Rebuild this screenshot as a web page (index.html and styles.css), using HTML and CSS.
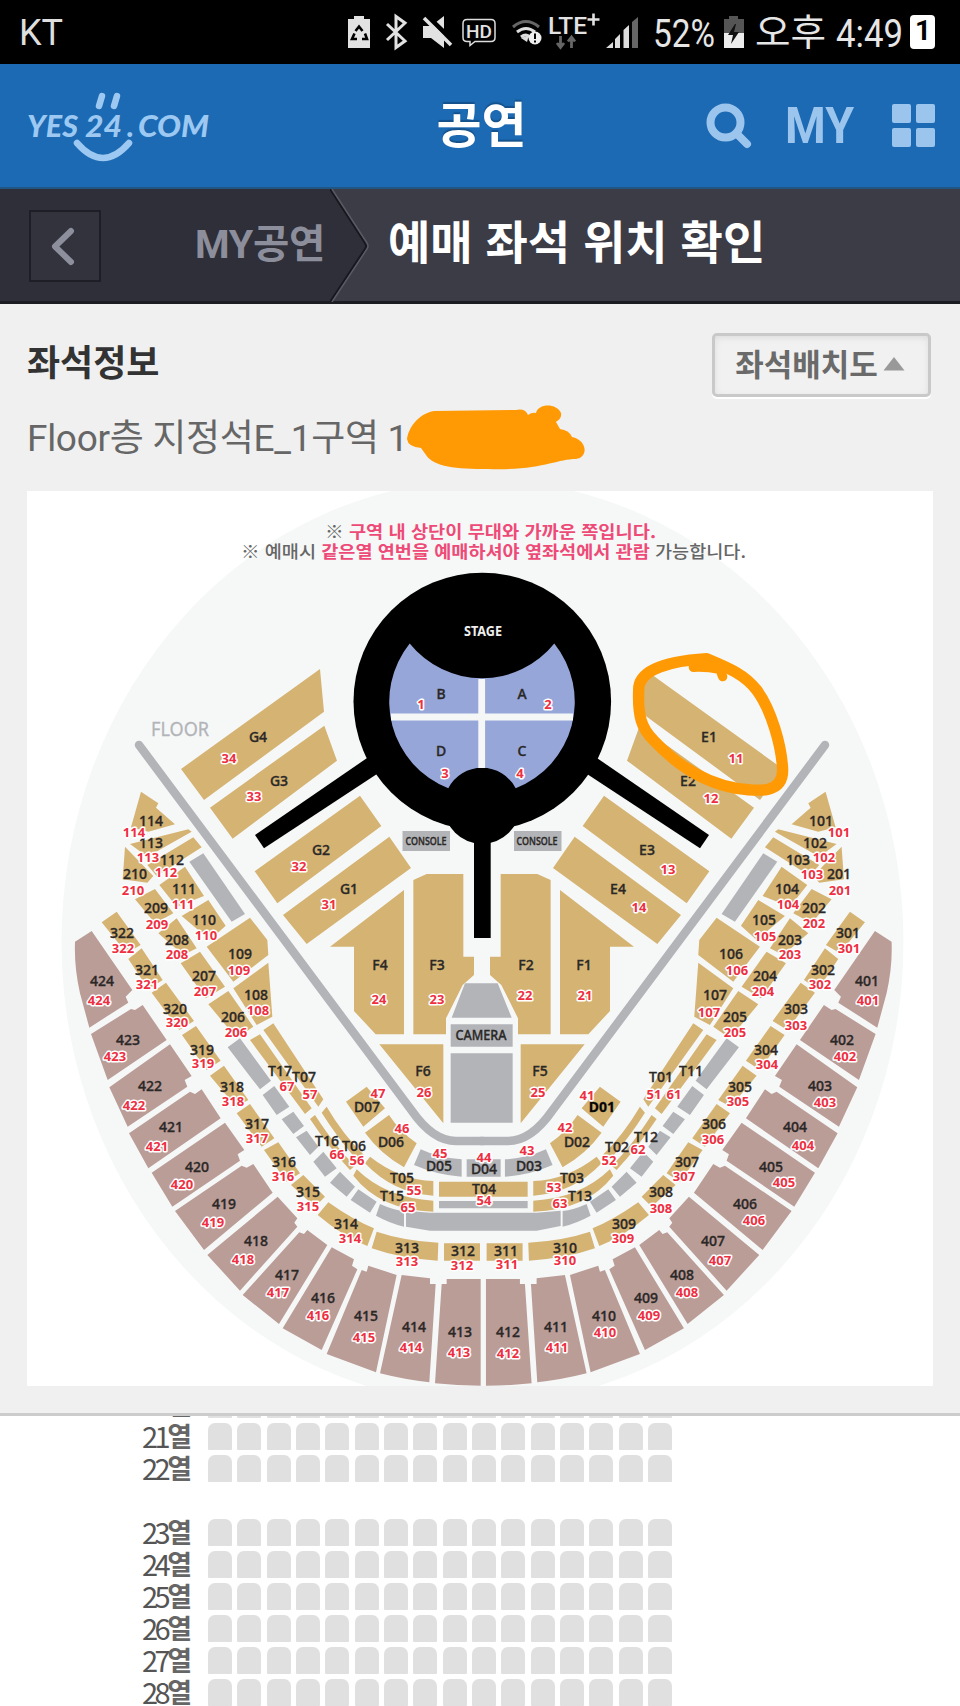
FILE: index.html
```html
<!DOCTYPE html>
<html lang="ko">
<head>
<meta charset="utf-8">
<title>예매 좌석 위치 확인</title>
<link rel="stylesheet" href="styles.css">
</head>
<body>
<div class="status">
  <span class="carrier">KT</span>
  <svg class="status-icons" width="620" height="64" viewBox="340 0 620 64">
    <g fill="#e2e2e2">
      <path d="M348 19h6v-3h10v3h6v29h-22z"/>
      <path d="M423 26h8l13-10v32l-13-10h-8z"/>
    </g>
    <path d="M355.5 31l3.500-4.500 3.500 4.500M365 33.500l2 5.500h-5M357 39h-5l2.500-5.500" fill="none" stroke="#000" stroke-width="2.600"/>
    <path d="M387 24l18 17-9 6.500V16.500l9 6.500-18 17" fill="none" stroke="#e2e2e2" stroke-width="3"/>
    <path d="M424 13l31 30" stroke="#000" stroke-width="5"/>
    <path d="M424 18l27 27" stroke="#e2e2e2" stroke-width="3.500"/>
    <path d="M467 19.500h24q4 0 4 4v14q0 4-4 4h-16l-5 4v-4h-3q-4 0-4-4v-14q0-4 4-4z" fill="none" stroke="#ddd" stroke-width="1.500"/>
    <text x="466" y="38" class="st-b" font-size="19" textLength="26" lengthAdjust="spacingAndGlyphs">HD</text>
    <g fill="none" stroke-width="3">
      <path d="M513 27q13-11 26 0" stroke="#666"/><path d="M517 32q9-7 18 0M521 37q5-4 9 0" stroke="#ddd"/>
    </g>
    <path d="M521 38l6 4 2-7z" fill="#ddd"/>
    <circle cx="535" cy="38" r="6.500" fill="#eee"/><path d="M535 33.500v5.500M535 40.500v2" stroke="#000" stroke-width="2"/>
    <text x="548" y="34" class="st-b" font-size="23" textLength="39" lengthAdjust="spacingAndGlyphs">LTE</text>
    <path d="M587.500 19.500h12M593.500 13.500v12" stroke="#e2e2e2" stroke-width="2.600"/>
    <path d="M560.500 36v11M557 43l3.500 4.500L564 43M571.500 48V38M568 41.500l3.500-4.500 3.500 4.500" fill="none" stroke="#666" stroke-width="2.800"/>
    <path d="M606 48l7-6v6zM615 39l5-5v14h-5zM623.500 30l5.500-5v23h-5.500z" fill="#ddd"/><path d="M632 22l6-5v31h-6z" fill="#666"/>
    <text x="653" y="46.500" class="st" font-size="38" textLength="62" lengthAdjust="spacingAndGlyphs">52%</text>
    <path d="M724 19h5v-3h9v3h6v15h-20z" fill="#555"/><path d="M724 33h20v15h-20z" fill="#ececec"/>
    <path d="M735 24l-7 11h5l-2 9 8-12h-5l2-8z" fill="#111"/>
    <text x="755" y="46" class="st kr" font-size="37" textLength="71" lengthAdjust="spacingAndGlyphs">오후</text>
    <text x="836" y="46.500" class="st" font-size="38" textLength="67" lengthAdjust="spacingAndGlyphs">4:49</text>
    <rect x="910" y="15" width="25" height="34" rx="4" fill="#fff"/>
    <text x="915" y="40" class="one">1</text>
  </svg>
</div>

<header class="head">
  <svg class="logo" width="190" height="80" viewBox="24 84 190 80" role="img" aria-label="YES24.COM">
    <g class="logo-text" font-size="29.500">
      <text x="27" y="136" textLength="51" lengthAdjust="spacingAndGlyphs">YES</text>
      <text x="85" y="136" textLength="37" lengthAdjust="spacingAndGlyphs">24</text>
      <text x="127" y="136">.</text>
      <text x="138" y="136" textLength="71" lengthAdjust="spacingAndGlyphs">COM</text>
    </g>
    <path d="M102 95l-3 10M117 95l-3 10" stroke="#9cc8f2" stroke-width="6.500" stroke-linecap="round"/>
    <path d="M77 142q26 30 52 0" fill="none" stroke="#9cc8f2" stroke-width="6.500" stroke-linecap="round"/>
  </svg>
  <h1>공연</h1>
  <svg class="tools" width="240" height="60" viewBox="695 96 240 60">
    <g fill="none" stroke="#9cc5ee" stroke-width="8"><circle cx="725.500" cy="122.500" r="15"/><path d="M737 134l10 10" stroke-linecap="round"/></g>
    <text x="785" y="142.500" class="my" textLength="69" lengthAdjust="spacingAndGlyphs">MY</text>
    <g fill="#9cc5ee"><rect x="892" y="104" width="19" height="19" rx="2"/><rect x="916" y="104" width="19" height="19" rx="2"/><rect x="892" y="128" width="19" height="19" rx="2"/><rect x="916" y="128" width="19" height="19" rx="2"/></g>
  </svg>
</header>

<nav class="crumbs">
  <div class="prev">
    <span class="back"><svg width="72" height="72" viewBox="0 0 72 72"><path d="M42 21L26 36.500 42 52" fill="none" stroke="#8e8f9c" stroke-width="6" stroke-linecap="round" stroke-linejoin="round"/></svg></span>
    <span class="parent">MY공연</span>
  </div>
  <svg class="arrow" width="40" height="113" viewBox="0 0 40 113"><path d="M0 0L37 57 0 113z" fill="#2e2f38"/><path d="M0 0L35 54q2 3 0 6L0 113" fill="none" stroke="#17171e" stroke-width="2"/><path d="M2 0L37 54q2 3 0 6L2 113" fill="none" stroke="#5a5a66" stroke-width="1.500"/></svg>
  <h2>예매 좌석 위치 확인</h2>
</nav>

<section class="info">
  <div class="info-head">
    <h3>좌석정보</h3>
    <button class="toggle">좌석배치도<svg width="22" height="14" viewBox="0 0 22 14"><path d="M11 0l10.500 13.500H.5z" fill="#999"/></svg></button>
  </div>
  <p class="seat"><span>Floor층 지정석E_1구역 1</span><svg class="blob" width="180" height="66" viewBox="404 404 180 66"><path d="M406 439C408 425 420 413 433 411L515 410Q524 408 527 415Q531 412 535 413C537 403 556 403 560 413C561 419 556 421 555 422L559 429Q568 430 571 437C586 440 588 457 575 459C555 459 540 471 487 469C455 469 433 467 425 455L420 448Q407 447 406 439z" fill="#ff9a05"/></svg></p>

  <div class="map">
  <svg width="906" height="895" viewBox="27 491 906 895">
    <ellipse cx="482.500" cy="942" rx="421" ry="462" fill="#f6f8f8"/>

    <g id="inner">
      <g transform="translate(60 640) scale(.33333)" class="gold">
        <path d="M363 387L780 87 792 215 432 480zM450 503L793 257 831 362 518 596zM584 694L900 467 964 558 652 790zM669 825L988 590 1053 684 740 912z"/>
        <path d="M585 585L930 348 960 396 612 625z" fill="#000"/>
      </g>
      <g transform="translate(350 930) scale(.33333)" class="gold">
        <path d="M162-120V313H77L12 243V50H-60zM190-150L230-168H340V80H372V135L338 165 288 265V313H190zM88 343H280V580z"/>
      </g>
      <path d="M139 745L412 1111Q433 1141 456 1141H483" class="rail"/>
      <path d="M402.500 831h47.500v20h-47.500z" class="gray"/>
    </g>
    <use href="#inner" transform="translate(964 0) scale(-1 1)"/>

    <g id="outer">
      <g transform="translate(60 640) scale(.33333)" class="gold">
        <path d="M243 455L295 490 288 503 345 553 265 575 213 562zM210 612L385 568 395 575 262 650zM400 592L425 622 290 708 262 675zM195 620L280 708 262 728 188 718zM375 680L432 768 350 800 298 735zM285 747L340 820 285 850 225 778zM445 780L497 857 450 900 365 828zM350 835L410 925 370 945 295 880z"/>
        <path d="M570 833L622 900 625 945 520 1025 440 920zM420 935L495 1040 437 1075 362 970zM625 968L637 1130 590 1155 520 1045zM505 1053L580 1160 530 1195 445 1093zM170 815L242 915 200 940 125 847zM245 925L308 1020 265 1048 205 957zM318 1028L402 1143 358 1170 275 1058z"/>
        <path d="M430 640L555 822 515 845 388 665z" class="gray"/>
        <path d="M95 873L217 1050 197 1070 205 1088 88 1163 60 1060Q42 980 45 905z" class="mauve"/>
      </g>
      <g transform="translate(60 1000) scale(.33333)" class="gold">
        <path d="M408 78L482 182 440 210 366 105zM600 103L755 325 735 342 570 120zM640 70L790 298 775 320 610 90zM492 197L565 300 528 320 450 227zM570 312L643 415 605 440 530 340zM655 427L720 520 680 545 612 450zM730 525L795 590 765 620 693 555zM805 607Q880 660 942 685L922 738Q850 710 773 645zM920 260L975 325 910 380 858 305z"/>
        <path d="M765 345Q830 445 885 497L870 510Q805 440 750 357zM800 320Q850 405 912 465L895 485Q830 410 785 338z"/>
        <path d="M540 115L633 242 600 268 503 142zM643 258L688 320 650 345 608 285zM700 335L732 378 700 402 665 358zM740 392L775 440 750 465 708 412zM790 455L830 505 795 530 760 485zM840 515L885 560 860 590 810 548zM895 568L950 605 930 638 872 600z" class="gray"/>
        <path class="mauve" d="M248 15L320 120 143 240 93 102 213 27 225 30zM330 133L395 228 374 240 382 260 203 380 148 262zM425 268L482 355 265 505 207 400 390 275 405 282zM495 368L553 450 533 463 540 482 337 620 275 518zM580 492L638 578 432 750 345 633 545 497 560 503zM653 590L712 655 703 668 712 680 540 872 442 765zM742 690L802 735 657 972 548 885 718 697 732 702zM815 742L882 778 876 797 892 808 785 1050 668 985zM925 797L1010 825 948 1117 800 1062 905 810 920 815z"/>
      </g>
      <g transform="translate(350 930) scale(.33333)" class="gold">
        <path d="M117 555Q150 605 200 640L162 712Q90 670 45 608zM60 680Q150 750 250 753V797Q130 790 45 700zM20 718Q110 805 250 812V845Q90 840 10 737zM80 905Q160 932 265 938L263 992Q150 985 65 955zM282 940H390V992H282z"/>
        <path d="M212 658Q270 685 335 688V740Q260 735 192 705zM90 822Q130 840 162 843V890Q120 880 78 857z" class="gray"/>
        <path class="mauve" d="M155 1035L240 1045V1062H257L238 1357Q160 1348 90 1330zM290 1047H392V1367Q320 1367 255 1360L275 1062H290z"/>
      </g>
    </g>
    <use href="#outer" transform="translate(966.600 0) scale(-1 1)"/>

    <g transform="translate(350 930) scale(.33333)" class="gray">
      <path d="M350 688H452V740H350zM267 813H533V835H267zM168 842L240 848H560L632 842V888L560 902H240L168 890zM345 160H443L485 263H305zM302 283H488V350H302zM302 370H488V578H302z"/>
      <path d="M267 755H533V800H267z" fill="#d5b373"/>
    </g>

    <circle cx="482.300" cy="701.500" r="128.800"/>
    <circle cx="482" cy="806" r="38"/>
    <path d="M474 830h16.700v108H474z"/>
    <path d="M409.700 643.500A93 93 0 0 0 448.300 788.300A38 38 0 0 1 515.700 788.300A93 93 0 0 0 554.300 643.500A92.600 92.600 0 0 1 409.700 643.500z" fill="#96a6d8"/>
    <path d="M481.700 679v89M391 717h182" stroke="#f5f7f7" stroke-width="6.800"/>

    <g class="note">
      <text x="325" y="538" textLength="331" lengthAdjust="spacingAndGlyphs"><tspan class="dim">※</tspan> 구역 내 상단이 무대와 가까운 쪽입니다.</text>
      <text x="241" y="557.500" textLength="505" lengthAdjust="spacingAndGlyphs"><tspan class="dim">※ 예매시</tspan> 같은열 연번을 예매하셔야 옆좌석에서 관람 <tspan class="dim">가능합니다.</tspan></text>
    </g>
    <text x="151" y="736" class="floor" textLength="58" lengthAdjust="spacingAndGlyphs">FLOOR</text>
    <text x="464" y="636" class="stage" textLength="38" lengthAdjust="spacingAndGlyphs">STAGE</text>

    <g class="names" transform="translate(0 5)">
      <text x="441" y="694">B</text><text x="522" y="694">A</text><text x="441" y="751">D</text><text x="522" y="751">C</text>
      <text x="258" y="737">G4</text><text x="279" y="781">G3</text><text x="321" y="850">G2</text><text x="349" y="889">G1</text>
      <text x="709" y="737">E1</text><text x="688" y="781">E2</text><text x="647" y="850">E3</text><text x="618" y="889">E4</text>
      <text x="380" y="965">F4</text><text x="437" y="965">F3</text><text x="526" y="965">F2</text><text x="584" y="965">F1</text><text x="423" y="1071">F6</text><text x="540" y="1071">F5</text>
      <text x="481" y="1035" textLength="51" lengthAdjust="spacingAndGlyphs">CAMERA</text>
      <text x="426" y="840" class="con" textLength="41" lengthAdjust="spacingAndGlyphs">CONSOLE</text><text x="537" y="840" class="con" textLength="41" lengthAdjust="spacingAndGlyphs">CONSOLE</text>
      <text x="151" y="821">114</text><text x="151" y="843">113</text><text x="172" y="860">112</text><text x="184" y="889">111</text><text x="204" y="920">110</text><text x="240" y="954">109</text><text x="256" y="995">108</text>
      <text x="135" y="874">210</text><text x="156" y="908">209</text><text x="177" y="940">208</text><text x="204" y="976">207</text><text x="233" y="1017">206</text>
      <text x="122" y="933">322</text><text x="147" y="970">321</text><text x="175" y="1009">320</text><text x="202" y="1050">319</text><text x="232" y="1087">318</text><text x="257" y="1124">317</text><text x="284" y="1162">316</text><text x="308" y="1192">315</text><text x="346" y="1224">314</text><text x="407" y="1248">313</text><text x="463" y="1251">312</text><text x="506" y="1251">311</text><text x="565" y="1248">310</text><text x="624" y="1224">309</text><text x="661" y="1192">308</text><text x="687" y="1162">307</text><text x="714" y="1124">306</text><text x="740" y="1087">305</text><text x="766" y="1050">304</text><text x="796" y="1009">303</text><text x="823" y="970">302</text><text x="848" y="933">301</text>
      <text x="102" y="981">424</text><text x="128" y="1040">423</text><text x="150" y="1086">422</text><text x="171" y="1127">421</text><text x="197" y="1167">420</text><text x="224" y="1204">419</text><text x="256" y="1241">418</text><text x="287" y="1275">417</text><text x="323" y="1298">416</text><text x="366" y="1316">415</text><text x="414" y="1327">414</text><text x="460" y="1332">413</text><text x="508" y="1332">412</text><text x="556" y="1327">411</text><text x="604" y="1316">410</text><text x="646" y="1298">409</text><text x="682" y="1275">408</text><text x="713" y="1241">407</text><text x="745" y="1204">406</text><text x="771" y="1167">405</text><text x="795" y="1127">404</text><text x="820" y="1086">403</text><text x="842" y="1040">402</text><text x="867" y="981">401</text>
      <text x="821" y="821">101</text><text x="815" y="843">102</text><text x="798" y="860">103</text><text x="787" y="889">104</text><text x="764" y="920">105</text><text x="731" y="954">106</text><text x="715" y="995">107</text>
      <text x="839" y="874">201</text><text x="814" y="908">202</text><text x="790" y="940">203</text><text x="765" y="976">204</text><text x="735" y="1017">205</text>
      <text x="280" y="1071">T17</text><text x="304" y="1077">T07</text><text x="327" y="1141">T16</text><text x="354" y="1146">T06</text><text x="402" y="1178">T05</text><text x="392" y="1196">T15</text><text x="484" y="1189">T04</text><text x="572" y="1178">T03</text><text x="580" y="1196">T13</text><text x="617" y="1147">T02</text><text x="646" y="1137">T12</text><text x="661" y="1077">T01</text><text x="691" y="1071">T11</text>
      <text x="367" y="1107">D07</text><text x="391" y="1142">D06</text><text x="439" y="1166">D05</text><text x="484" y="1169">D04</text><text x="529" y="1166">D03</text><text x="577" y="1142">D02</text><text x="602" y="1107" class="bold">D01</text>
    </g>

    <g class="codes" transform="translate(0 4.500)">
      <text x="421" y="704">1</text><text x="548" y="704">2</text><text x="445" y="773">3</text><text x="520" y="773">4</text>
      <text x="229" y="758">34</text><text x="254" y="796">33</text><text x="299" y="866">32</text><text x="329" y="904">31</text>
      <text x="736" y="758">11</text><text x="711" y="798">12</text><text x="668" y="869">13</text><text x="639" y="907">14</text>
      <text x="379" y="999">24</text><text x="437" y="999">23</text><text x="525" y="995">22</text><text x="585" y="995">21</text><text x="424" y="1092">26</text><text x="538" y="1092">25</text>
      <text x="134" y="832">114</text><text x="148" y="857">113</text><text x="166" y="872">112</text><text x="183" y="904">111</text><text x="206" y="935">110</text><text x="239" y="970">109</text><text x="258" y="1010">108</text>
      <text x="133" y="890">210</text><text x="157" y="924">209</text><text x="177" y="954">208</text><text x="205" y="991">207</text><text x="236" y="1032">206</text>
      <text x="123" y="948">322</text><text x="147" y="984">321</text><text x="177" y="1022">320</text><text x="203" y="1063">319</text><text x="233" y="1101">318</text><text x="257" y="1138">317</text><text x="283" y="1176">316</text><text x="308" y="1206">315</text><text x="350" y="1238">314</text><text x="407" y="1261">313</text><text x="462" y="1265">312</text><text x="507" y="1264">311</text><text x="565" y="1260">310</text><text x="623" y="1238">309</text><text x="661" y="1208">308</text><text x="684" y="1176">307</text><text x="713" y="1139">306</text><text x="738" y="1101">305</text><text x="767" y="1064">304</text><text x="796" y="1025">303</text><text x="820" y="984">302</text><text x="849" y="948">301</text>
      <text x="99" y="1000">424</text><text x="115" y="1056">423</text><text x="134" y="1105">422</text><text x="157" y="1146">421</text><text x="182" y="1184">420</text><text x="213" y="1222">419</text><text x="243" y="1259">418</text><text x="278" y="1292">417</text><text x="318" y="1315">416</text><text x="364" y="1337">415</text><text x="411" y="1347">414</text><text x="459" y="1352">413</text><text x="508" y="1353">412</text><text x="557" y="1347">411</text><text x="605" y="1332">410</text><text x="649" y="1315">409</text><text x="687" y="1292">408</text><text x="720" y="1260">407</text><text x="754" y="1220">406</text><text x="784" y="1182">405</text><text x="803" y="1145">404</text><text x="825" y="1102">403</text><text x="845" y="1056">402</text><text x="868" y="1000">401</text>
      <text x="839" y="832">101</text><text x="824" y="857">102</text><text x="812" y="874">103</text><text x="788" y="904">104</text><text x="765" y="936">105</text><text x="737" y="970">106</text><text x="709" y="1012">107</text>
      <text x="840" y="890">201</text><text x="814" y="923">202</text><text x="790" y="954">203</text><text x="763" y="991">204</text><text x="735" y="1032">205</text>
      <text x="287" y="1086">67</text><text x="310" y="1094">57</text><text x="337" y="1154">66</text><text x="357" y="1160">56</text><text x="414" y="1190">55</text><text x="408" y="1207">65</text><text x="484" y="1200">54</text><text x="554" y="1187">53</text><text x="560" y="1203">63</text><text x="609" y="1160">52</text><text x="638" y="1149">62</text><text x="654" y="1094">51</text><text x="674" y="1094">61</text>
      <text x="378" y="1093">47</text><text x="402" y="1128">46</text><text x="440" y="1153">45</text><text x="484" y="1157">44</text><text x="527" y="1150">43</text><text x="565" y="1127">42</text><text x="587" y="1095">41</text>
    </g>

    <g transform="translate(560 640) scale(.33333)" fill="none" stroke="#ff9a05" stroke-linejoin="round" stroke-linecap="round">
      <path stroke-width="34" d="M440 56C340 62 235 85 236 150C233 230 245 265 280 300C350 375 430 428 530 445C600 455 668 460 668 390C665 320 635 210 590 150C555 105 510 85 440 56z"/>
      <path stroke-width="28" d="M400 82Q440 80 480 88L488 110M420 70L470 78"/>
    </g>
  </svg>
  </div>
</section>

<main class="rows">
  <div class="row"><b>20<em>열</em></b><i></i><i></i><i></i><i></i><i></i><i></i><i></i><i></i><i></i><i></i><i></i><i></i><i></i><i></i><i></i><i></i></div>
  <div class="row"><b>21<em>열</em></b><i></i><i></i><i></i><i></i><i></i><i></i><i></i><i></i><i></i><i></i><i></i><i></i><i></i><i></i><i></i><i></i></div>
  <div class="row"><b>22<em>열</em></b><i></i><i></i><i></i><i></i><i></i><i></i><i></i><i></i><i></i><i></i><i></i><i></i><i></i><i></i><i></i><i></i></div>
  <div class="row gap"><b>23<em>열</em></b><i></i><i></i><i></i><i></i><i></i><i></i><i></i><i></i><i></i><i></i><i></i><i></i><i></i><i></i><i></i><i></i></div>
  <div class="row"><b>24<em>열</em></b><i></i><i></i><i></i><i></i><i></i><i></i><i></i><i></i><i></i><i></i><i></i><i></i><i></i><i></i><i></i><i></i></div>
  <div class="row"><b>25<em>열</em></b><i></i><i></i><i></i><i></i><i></i><i></i><i></i><i></i><i></i><i></i><i></i><i></i><i></i><i></i><i></i><i></i></div>
  <div class="row"><b>26<em>열</em></b><i></i><i></i><i></i><i></i><i></i><i></i><i></i><i></i><i></i><i></i><i></i><i></i><i></i><i></i><i></i><i></i></div>
  <div class="row"><b>27<em>열</em></b><i></i><i></i><i></i><i></i><i></i><i></i><i></i><i></i><i></i><i></i><i></i><i></i><i></i><i></i><i></i><i></i></div>
  <div class="row"><b>28<em>열</em></b><i></i><i></i><i></i><i></i><i></i><i></i><i></i><i></i><i></i><i></i><i></i><i></i><i></i><i></i><i></i><i></i></div>
</main>
</body>
</html>
```
FILE: styles.css
```css
* { box-sizing: border-box; margin: 0; padding: 0; }
body {
  width: 960px;
  height: 1706px;
  overflow: hidden;
  display: flex;
  flex-direction: column;
  background: #fff;
  font-family: Roboto, "Noto Sans CJK KR", sans-serif;
}
svg { display: block; flex: none; }

/* Status bar */
.status { height: 64px; flex: none; background: #000; display: flex; align-items: center; justify-content: space-between; padding-left: 19px; }
.carrier { color: #dedede; font-size: 36px; line-height: 64px; padding-top: 2px; }
.st { fill: #e6e6e6; }
.st-b { fill: #e2e2e2; font-weight: 500; }
.kr { font-family: "Noto Sans CJK KR", sans-serif; }
.one { font-size: 28px; font-weight: 700; fill: #000; }

/* Header */
.head {
  height: 125px; flex: none; background: #1b6ab3; border-bottom: 2px solid #205684;
  display: grid; grid-template-columns: 1fr auto 1fr; align-items: center; padding: 0 25px 0 24px;
}
.head h1 { font: 700 49px/70px "Noto Sans CJK KR", sans-serif; color: #fff; text-shadow: 0 -2px 1px #15528c; margin: -7px -2px 0 2px; }
.logo { margin-top: -2px; }
.logo-text { font-family: Lato, sans-serif; font-weight: 900; font-style: italic; fill: #9cc8f2; }
.tools { justify-self: end; }
.my { font-size: 50px; font-weight: 700; fill: #9cc5ee; }

/* Breadcrumbs */
.crumbs { height: 115px; flex: none; background: #3c3c47; border-bottom: 3px solid #1c1c23; display: flex; }
.prev { width: 330px; background: #2e2f38; display: flex; align-items: center; justify-content: space-between; padding: 0 5px 0 29px; }
.back { width: 72px; height: 72px; border: 2px solid #1e1e27; background: #32333d; display: flex; margin-top: 2px; }
.back svg { margin: -2px; }
.parent { font-size: 39.500px; font-weight: 700; letter-spacing: -0.300px; color: #8d8e9b; line-height: 50px; }
.crumbs h2 { font: 700 46px/66px "Noto Sans CJK KR", sans-serif; color: #fff; margin: 17px 0 0 18px; white-space: nowrap; }

/* Seat information */
.info { height: 1112px; flex: none; background: #f0f0f0; border-bottom: 3px solid #ccc; padding: 29px 27px 0; }
.info-head { display: flex; justify-content: space-between; height: 64px; }
.info h3 { font: 700 36px/54px "Noto Sans CJK KR", sans-serif; color: #333; }
.toggle {
  width: 219px; height: 64px; border: 3px solid #c9c9c9; border-radius: 5px; background: #f1f1f1;
  box-shadow: inset 0 2px 6px #ddd, 0 2px 0 #fff; color: #6a6a6a; margin-right: 2px;
  font: 700 31px/46px "Noto Sans CJK KR", sans-serif;
  display: flex; align-items: center; justify-content: center; gap: 5px; padding: 0 3px 4px 0;
}
.toggle svg { margin-top: 2px; }
.seat { display: flex; align-items: center; height: 80px; font-size: 37px; color: #666; white-space: nowrap; }
.seat span { letter-spacing: -0.300px; margin-top: -5px; }
.blob { margin-left: -3px; }
.map { width: 906px; height: 895px; background: #fff; margin-top: 14px; }

.gold { fill: #d5b373; }
.gray { fill: #b3b4b8; }
.mauve { fill: #bb9d98; }
.rail { fill: none; stroke: #b3b4b8; stroke-width: 8.500; stroke-linecap: round; }
.note { font: 700 17px "Noto Sans CJK KR", sans-serif; fill: #ee4a77; }
.dim { fill: #666; font-weight: 500; }
.floor { font: 20px "Noto Sans", sans-serif; fill: #b3b4b8; stroke: #b3b4b8; stroke-width: .3px; }
.stage { font: 700 14px "Noto Sans", sans-serif; fill: #eee; }
.names { font: 500 14px "Noto Sans", sans-serif; fill: #2a2826; stroke: #2a2826; stroke-width: .35px; text-anchor: middle; }
.names .con { font-size: 11.500px; }
.names .bold { font-weight: 700; fill: #000; }
.codes { font: 700 13px "Noto Sans", sans-serif; fill: #ee2f42; text-anchor: middle; stroke: #fff; stroke-width: 3px; stroke-linejoin: round; paint-order: stroke; }

/* Seat rows */
.rows { flex: 1; overflow: hidden; padding-left: 142px; display: flex; flex-direction: column; }
.row { height: 27px; flex: none; display: flex; gap: 5.350px; margin-bottom: 5px; }
.row:first-child { margin-top: -25px; }
.row.gap { margin-top: 32px; }
.row b { width: 60.650px; font: 400 29px/25px "Noto Sans CJK KR", sans-serif; letter-spacing: -3.500px; color: #555; display: flex; }
.row em { font: 700 27px/26px "Noto Sans CJK KR", sans-serif; color: #666; }
.row i { width: 24px; height: 27px; background: #e0e0e0; border-radius: 7px 7px 1px 1px; }
```
